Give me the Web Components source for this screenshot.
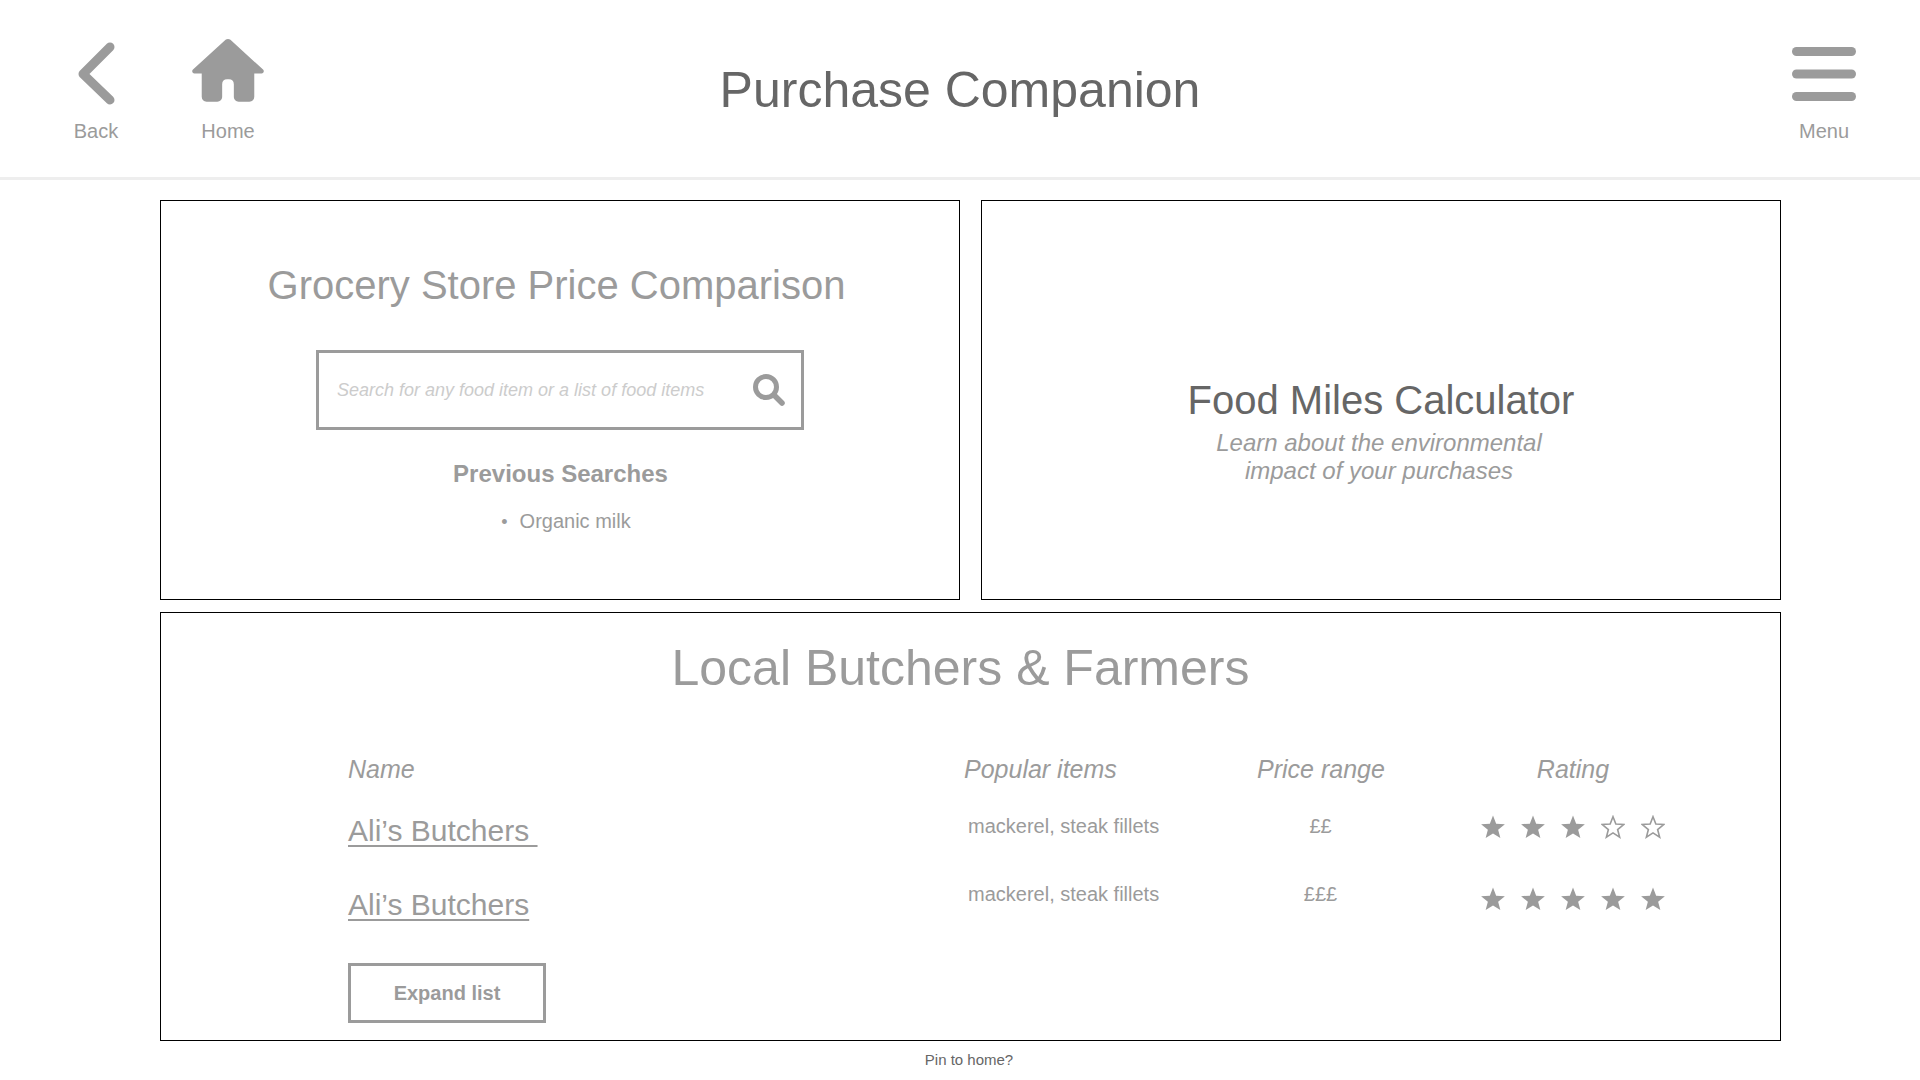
<!DOCTYPE html>
<html>
<head>
<meta charset="utf-8">
<title>Purchase Companion</title>
<style>
html, body { margin: 0; padding: 0; background: #fff; }
body { width: 1920px; height: 1080px; overflow: hidden; font-family: "Liberation Sans", Arial, sans-serif; color: #9b9b9b; }
main { display: grid; grid-template-columns: 800px 800px; column-gap: 21px; row-gap: 12px; padding: 20px 0 0 160px; grid-template-rows: 400px 429px; }
main > :last-child { grid-column: 1 / 3; }
</style>
</head>
<body>
<app-header>
  <nav-item slot="left" label="Back" width="106" top="42"><svg viewBox="0 0 40 63" width="40" height="63"><path d="M34 5 L7 32 L34 58" fill="none" stroke="#9b9b9b" stroke-width="9" stroke-linecap="round" stroke-linejoin="round"/></svg></nav-item>
  <nav-item slot="left" label="Home" width="158" top="38"><svg viewBox="0 0 74 67" width="72" height="66"><path d="M37 0.500c1 0 1.800.4 2.500 1l33.500 30.500c1.600 1.500.6 4-1.500 4h-7.500v24c0 3-2 5-5 5h-11c-2.800 0-5-2-5-5v-13c0-3-2-5-5-5h-2c-3 0-5 2-5 5v13c0 3-2.200 5-5 5h-11c-3 0-5-2-5-5v-24h-7.500c-2.100 0-3.100-2.500-1.500-4l33.500-30.500c.7-.6 1.500-1 2.500-1z" fill="#9b9b9b"/></svg></nav-item>
  <span slot="title">Purchase Companion</span>
  <nav-item slot="right" label="Menu" width="192" top="47"><svg viewBox="0 0 64 54" width="64" height="54"><g fill="#9b9b9b"><rect y="0" width="64" height="9" rx="4.500"/><rect y="22.500" width="64" height="9" rx="4.500"/><rect y="45" width="64" height="9" rx="4.500"/></g></svg></nav-item>
</app-header>
<main>
  <price-card></price-card>
  <miles-card></miles-card>
  <local-card>
    <seller-row name="Ali’s Butchers " items="mackerel, steak fillets" price="££" rating="3" style="--link-top:11px;--items-top:13px;--stars-top:14px"></seller-row>
    <seller-row name="Ali’s Butchers" items="mackerel, steak fillets" price="£££" rating="5" style="--link-top:10px;--items-top:6px;--stars-top:11px"></seller-row>
  </local-card>
</main>
<pin-note>Pin to home?</pin-note>

<script>
const defineSimple = (name, html) => {
  customElements.define(name, class extends HTMLElement {
    constructor() {
      super();
      this.attachShadow({mode: "open"}).innerHTML = html;
    }
  });
};

defineSimple("app-header", `
<style>
:host { display: grid; grid-template-columns: 1fr auto 1fr; height: 177px; border-bottom: 3px solid #eee; }
.left { display: flex; padding-left: 43px; }
.right { display: flex; justify-content: flex-end; }
.title { font-size: 50px; line-height: 50px; color: #666; padding-top: 65px; }
</style>
<div class="left"><slot name="left"></slot></div>
<div class="title"><slot name="title"></slot></div>
<div class="right"><slot name="right"></slot></div>
`);

customElements.define("nav-item", class extends HTMLElement {
  constructor() {
    super();
    this.attachShadow({mode: "open"}).innerHTML = `
<style>
:host { display: block; text-align: center; }
.box { display: flex; justify-content: center; }
::slotted(svg) { display: block; }
.t { font-size: 20px; line-height: 24px; }
</style>
<div class="box"><slot></slot></div><div class="t"></div>`;
  }
  connectedCallback() {
    this.shadowRoot.querySelector(".t").textContent = this.getAttribute("label");
    this.style.width = this.getAttribute("width") + "px";
    const top = +this.getAttribute("top");
    const box = this.shadowRoot.querySelector(".box");
    box.style.paddingTop = top + "px";
    box.style.height = (119 - top) + "px";
  }
});

defineSimple("price-card", `
<style>
:host { display: block; border: 1px solid #000; box-sizing: border-box; text-align: center; }
h2 { font-weight: normal; font-size: 40px; line-height: 46px; margin: 61px 0 0; padding-right: 7px; }
.search { display: flex; justify-content: space-between; align-items: center; box-sizing: border-box; width: 488px; height: 80px; margin: 42px auto 0; border: 3px solid #9b9b9b; padding: 0 16px 0 18px; font-style: italic; font-size: 18px; color: #ccc; }
svg { display: block; }
h3 { font-size: 24px; line-height: 28px; margin: 30px 0 0; padding-left: 1px; }
ul { list-style: none; margin: 21px 0 0; padding: 0 0 0 12px; font-size: 20px; line-height: 24px; }
li::before { content: "•"; margin-right: 12px; font-size: 18px; }
</style>
<h2>Grocery Store Price Comparison</h2>
<div class="search"><span>Search for any food item or a list of food items</span>
<svg viewBox="0 0 32 32" width="32" height="32"><circle cx="13" cy="13" r="10.500" fill="none" stroke="#9b9b9b" stroke-width="5"/><path d="M21 21 L29 29" stroke="#9b9b9b" stroke-width="5.500" stroke-linecap="round"/></svg></div>
<h3>Previous Searches</h3>
<ul><li>Organic milk</li></ul>
`);

defineSimple("miles-card", `
<style>
:host { display: flex; flex-direction: column; border: 1px solid #000; box-sizing: border-box; text-align: center; padding-top: 176px; }
h2 { font-weight: normal; font-size: 40px; line-height: 46px; margin: 0; color: #666; }
p { margin: 6px 0 0; padding-right: 4px; font-style: italic; font-size: 24px; line-height: 28px; }
</style>
<h2>Food Miles Calculator</h2>
<p>Learn about the environmental<br>impact of your purchases</p>
`);

defineSimple("local-card", `
<style>
:host { display: block; border: 1px solid #000; box-sizing: border-box; padding: 0 0 0 187px; }
h2 { font-weight: normal; font-size: 50px; line-height: 58px; margin: 26px 0 0 -187px; padding-right: 20px; text-align: center; }
.heads { display: grid; grid-template-columns: 616px 260px 194px 310px; margin: 57px 0 17px; font-style: italic; font-size: 25px; line-height: 30px; }
.c { text-align: center; }
button { display: block; margin-top: 12px; width: 198px; height: 60px; box-sizing: border-box; background: #fff; border: 3px solid #9b9b9b; color: #9b9b9b; font: bold 20px "Liberation Sans", Arial, sans-serif; }
</style>
<h2>Local Butchers &amp; Farmers</h2>
<div class="heads"><span>Name</span><span>Popular items</span><span class="c">Price range</span><span class="c">Rating</span></div>
<slot></slot>
<button>Expand list</button>
`);

customElements.define("seller-row", class extends HTMLElement {
  constructor() {
    super();
    this.attachShadow({mode: "open"});
  }
  connectedCallback() {
    const star = "M12 .5 L15.170 8.630 L23.900 9.140 L17.140 14.670 L19.350 23.110 L12 18.400 L4.650 23.110 L6.860 14.670 L.1 9.140 L8.830 8.630 Z";
    let stars = "";
    for (let i = 0; i < 5; i++) {
      const on = i < +this.getAttribute("rating");
      stars += on
        ? `<svg viewBox="0 0 24 24" width="24" height="24"><path d="${star}" fill="#9b9b9b"/></svg>`
        : `<svg viewBox="0 0 24 24" width="24" height="24"><path d="${star}" fill="#fff" stroke="#9b9b9b" stroke-width="1.800" transform="translate(12 13) scale(.9) translate(-12 -13)"/></svg>`;
    }
    this.shadowRoot.innerHTML = `
<style>
:host { display: grid; grid-template-columns: 616px 260px 194px 310px; height: 75px; align-items: start; }
a { font-size: 30px; line-height: 38px; color: #9b9b9b; text-decoration: underline; text-decoration-thickness: 2px; text-underline-offset: 4px; white-space: pre; padding-top: var(--link-top); display: block; }
.items { font-size: 20px; line-height: 24px; padding: var(--items-top) 0 0 4px; }
.price { font-size: 20px; line-height: 24px; padding-top: var(--items-top); text-align: center; margin-left: -1px; }
.stars { display: flex; justify-content: center; gap: 16px; padding-top: var(--stars-top); }
svg { display: block; }
</style>
<a>${this.getAttribute("name")}</a>
<span class="items">${this.getAttribute("items")}</span>
<span class="price">${this.getAttribute("price")}</span>
<div class="stars">${stars}</div>`;
  }
});

defineSimple("pin-note", `
<style>
:host { display: block; text-align: center; font-size: 15px; line-height: 18px; color: #666; padding: 10px 0 0 18px; width: 1920px; box-sizing: border-box; }
</style>
<slot></slot>
`);
</script>
</body>
</html>
